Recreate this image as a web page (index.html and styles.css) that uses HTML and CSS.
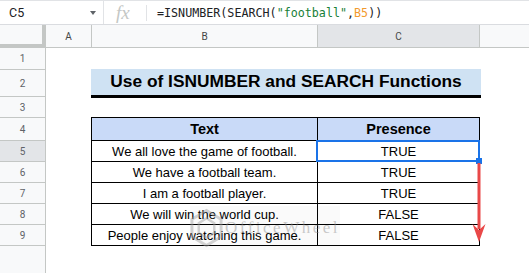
FILE: index.html
```html
<!DOCTYPE html>
<html lang="en">
<head>
    <meta charset="UTF-8">
    <meta name="viewport" content="width=device-width, initial-scale=1.0">
    <title>ISNUMBER and SEARCH Functions</title>
    <link rel="stylesheet" href="styles.css">
</head>
<body>

    <div class="formula-bar">
        <div class="name-box">
            <span class="cell-ref">C5</span>
            <span class="caret"></span>
        </div>
        <div class="fx">fx</div>
        <div class="formula">=ISNUMBER(SEARCH(<span class="str">"football"</span>,<span class="ref">B5</span>))</div>
    </div>

    <div class="sheet">
        <div class="row col-heads">
            <div class="corner"></div>
            <div class="col-head">A</div>
            <div class="col-head">B</div>
            <div class="col-head active">C</div>
            <div class="col-head last"></div>
        </div>

        <div class="row r1">
            <div class="row-head">1</div>
        </div>
        <div class="row r2">
            <div class="row-head">2</div>
            <div class="title">Use of ISNUMBER and SEARCH Functions</div>
        </div>
        <div class="row r3">
            <div class="row-head">3</div>
        </div>
        <div class="row r4">
            <div class="row-head">4</div>
            <div class="cell b head">Text</div>
            <div class="cell c head">Presence</div>
        </div>
        <div class="row">
            <div class="row-head active">5</div>
            <div class="cell b">We all love the game of football.</div>
            <div class="cell c selected">TRUE
                <span class="selection"><span class="handle"></span></span>
            </div>
        </div>
        <div class="row">
            <div class="row-head">6</div>
            <div class="cell b">We have a football team.</div>
            <div class="cell c">TRUE</div>
        </div>
        <div class="row">
            <div class="row-head">7</div>
            <div class="cell b">I am a football player.</div>
            <div class="cell c">TRUE</div>
        </div>
        <div class="row">
            <div class="row-head">8</div>
            <div class="cell b">We will win the world cup.</div>
            <div class="cell c">FALSE</div>
        </div>
        <div class="row">
            <div class="row-head">9</div>
            <div class="cell b">People enjoy watching this game.</div>
            <div class="cell c">FALSE</div>
        </div>
        <div class="row rest">
            <div class="row-head blank"></div>
        </div>

        <!-- drag arrow from the fill handle down to row 9 -->
        <svg class="drag-arrow" width="14" height="80" viewBox="0 0 14 80">
            <rect x="5.5" y="0" width="3" height="66" fill="#e94848"/>
            <polygon points="0.5,61 7,67 13.5,61 7,79" fill="#e94848"/>
        </svg>

        <div class="watermark">
            <svg width="34" height="40" viewBox="0 0 34 40">
                <polygon points="17,2 32,11 32,29 17,38 2,29 2,11" fill="none" stroke="#9a9a9a" stroke-width="3"/>
                <polygon points="17,10 25,15 25,25 17,30 9,25 9,15" fill="none" stroke="#9a9a9a" stroke-width="2.5"/>
            </svg>
            <span>OfficeWheel</span>
        </div>
    </div>

</body>
</html>
```

FILE: styles.css
```css
body {
    margin: 0;
    width: 529px;
    height: 273px;
    overflow: hidden;
    background: #fff;
    font-family: 'Liberation Sans', Arial, sans-serif;
    display: flex;
    flex-direction: column;
}

/* ---------- formula bar ---------- */

.formula-bar {
    height: 25px;
    box-sizing: border-box;
    border-top: 1px solid #e1e3e6;
    border-bottom: 1px solid #dadce0;
    display: flex;
    align-items: center;
}

.name-box {
    width: 104px;
    height: 100%;
    box-sizing: border-box;
    border-right: 1px solid #e1e3e6;
    display: flex;
    align-items: center;
    padding-left: 9px;
}

.cell-ref {
    font-family: Roboto, sans-serif;
    font-size: 12.5px;
    color: #202124;
    flex: 1;
}

.caret {
    width: 0;
    height: 0;
    border-left: 3.5px solid transparent;
    border-right: 3.5px solid transparent;
    border-top: 4px solid #5f6368;
    margin-right: 7px;
}

.fx {
    width: 43px;
    height: 16px;
    box-sizing: border-box;
    border-right: 1px solid #e1e3e6;
    font-family: 'Liberation Serif', serif;
    font-style: italic;
    font-size: 19px;
    line-height: 16px;
    color: #c4c7c5;
    padding-left: 12px;
}

.formula {
    padding-left: 10px;
    font-family: 'DejaVu Sans Mono', monospace;
    font-size: 11.7px;
    color: #202124;
    white-space: nowrap;
}

.formula .str {
    color: #188038;
}

.formula .ref {
    color: #f29a2e;
}

/* ---------- grid ---------- */

.sheet {
    position: relative;
    flex: 1;
    display: flex;
    flex-direction: column;
}

.row {
    display: grid;
    grid-template-columns: 46px 46px 226px 162px 1fr;
    height: 21px;
    box-sizing: border-box;
}

.col-heads { height: 23px; }
.r1 { height: 22px; }
.r2 { height: 27px; }
.r3 { height: 21px; }
.r4 { height: 23px; }
.rest { flex: 1; }

.corner {
    background: #f8f9fa;
    border-right: 4px solid #c4c7c5;
    border-bottom: 4px solid #c4c7c5;
}

.col-head {
    background: #f8f9fa;
    border-right: 1px solid #c4c7c5;
    border-bottom: 1px solid #c4c7c5;
    font-family: Roboto, sans-serif;
    font-size: 10px;
    color: #444746;
    display: flex;
    align-items: center;
    justify-content: center;
}

.col-head.active {
    background: #e3e5e8;
}

.col-head.last {
    border-right: none;
}

.row-head {
    grid-column: 1;
    background: #f8f9fa;
    border-right: 1px solid #c4c7c5;
    border-bottom: 1px solid #c4c7c5;
    font-family: Roboto, sans-serif;
    font-size: 10px;
    color: #5f6368;
    display: flex;
    align-items: center;
    justify-content: center;
}

.row-head.active {
    background: #e3e5e8;
}

.row-head.blank {
    border-bottom: none;
}

/* ---------- table ---------- */

.title {
    grid-column: 3 / span 2;
    margin: -1px -1px -1px -1px;
    background: #cfe2f3;
    border-bottom: 3px solid #000;
    font-weight: bold;
    font-size: 17.33px;
    color: #000;
    display: flex;
    align-items: center;
    justify-content: center;
    padding-bottom: 1px;
}

.cell {
    border-right: 1px solid #000;
    border-bottom: 1px solid #000;
    font-size: 13px;
    color: #000;
    display: flex;
    align-items: center;
    justify-content: center;
    white-space: nowrap;
}

.cell.b {
    grid-column: 3;
    margin-left: -1px;
    border-left: 1px solid #000;
}

.cell.c {
    grid-column: 4;
}

.cell.head {
    margin-top: -1px;
    border-top: 1px solid #000;
    background: #c9daf8;
    font-weight: bold;
    font-size: 14.5px;
}

.cell.selected {
    position: relative;
}

.selection {
    position: absolute;
    top: -1px;
    left: -2px;
    right: -1px;
    bottom: -1px;
    border: 2px solid #1a73e8;
}

.handle {
    position: absolute;
    right: -4px;
    bottom: -4px;
    width: 6px;
    height: 6px;
    background: #1a73e8;
}

.drag-arrow {
    position: absolute;
    left: 472px;
    top: 138px;
}

.watermark {
    position: absolute;
    left: 190px;
    top: 181px;
    width: 150px;
    height: 44px;
    background: rgba(0, 0, 0, 0.035);
    display: flex;
    align-items: center;
    gap: 2px;
    opacity: 0.45;
}

.watermark span {
    font-family: 'Liberation Serif', serif;
    font-size: 17px;
    letter-spacing: 2.5px;
    color: #888;
}
```
